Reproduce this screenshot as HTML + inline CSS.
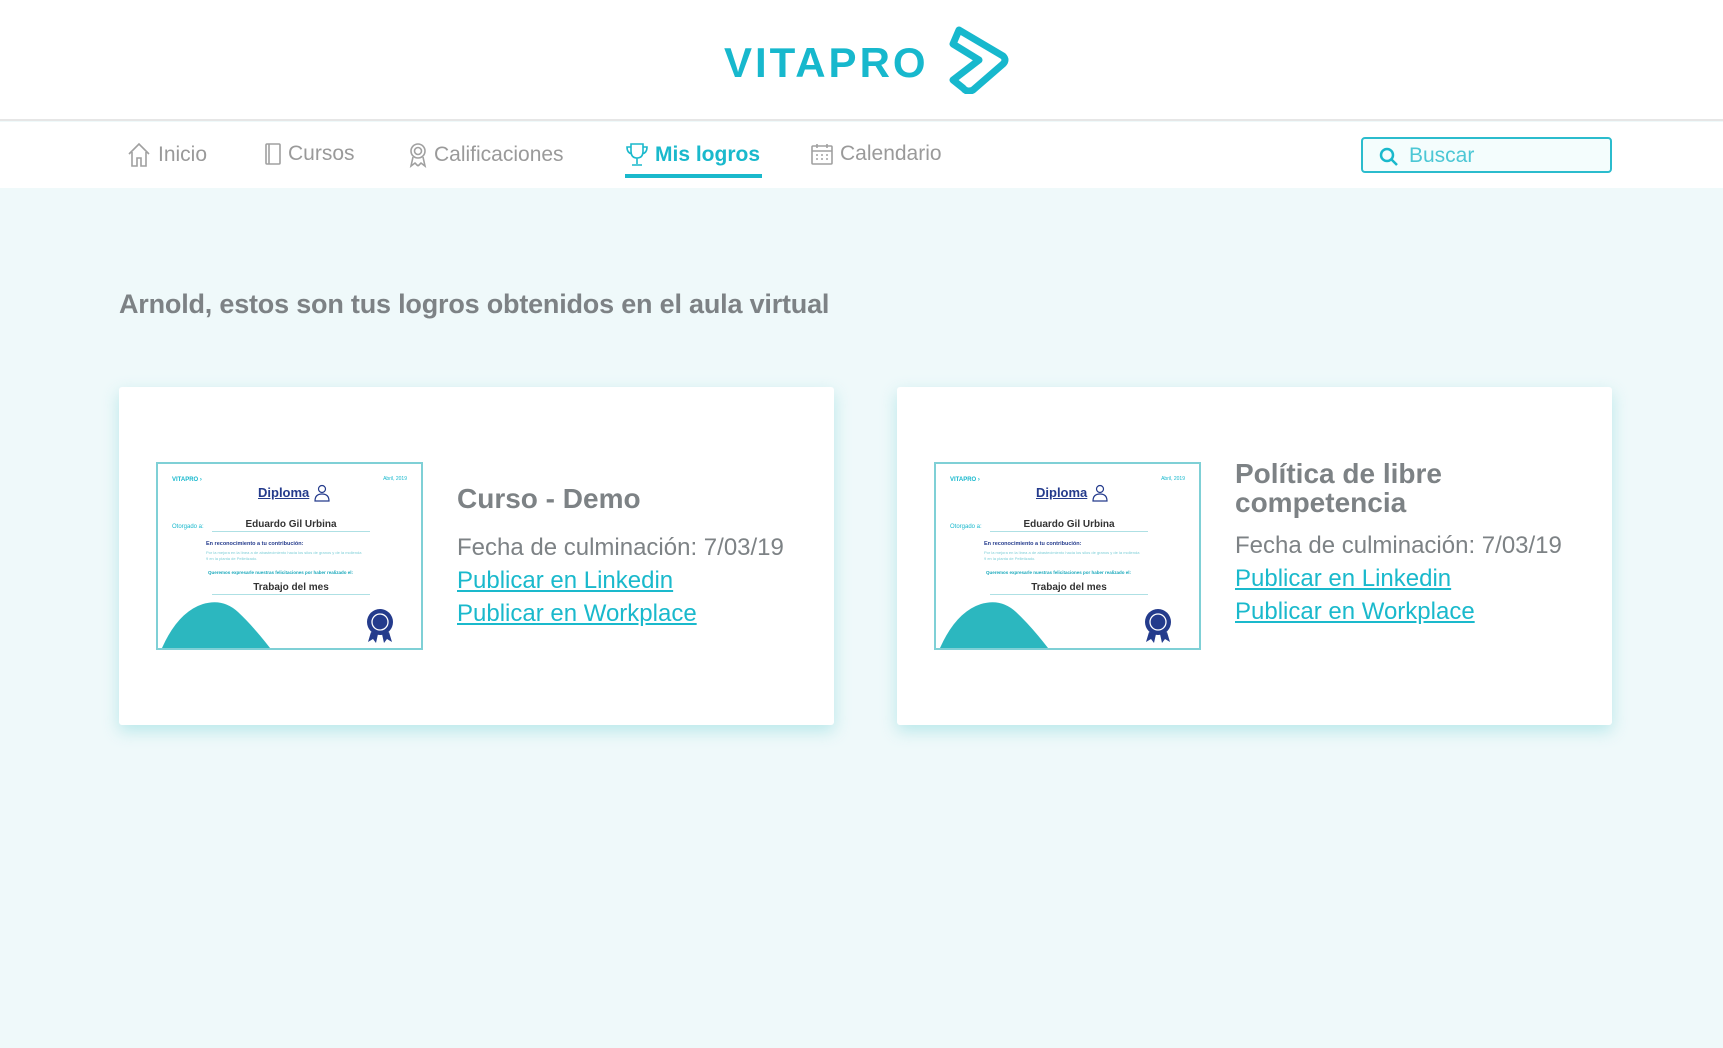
<!DOCTYPE html>
<html><head><meta charset="utf-8"><style>
*{margin:0;padding:0;box-sizing:border-box}
body{width:1723px;height:1048px;background:#eff9fa;font-family:"Liberation Sans",sans-serif;position:relative;overflow:hidden}
.hdr{position:absolute;left:0;top:0;width:1723px;height:121px;background:#fff;border-bottom:2px solid #e6e6e6}
.nav{position:absolute;left:0;top:122px;width:1723px;height:66px;background:#fff}
.ni{position:absolute;top:20px;font-size:21px;color:#9a9a9a;display:flex;align-items:center;gap:6px}
.ni svg{stroke:#a0a0a0;fill:none;stroke-width:1.6}
.act{color:#1ab9cc;font-weight:bold}
.act svg{stroke:#1ab9cc}
.search{position:absolute;left:1361px;top:137px;width:251px;height:36px;border:2px solid #2bbccd;border-radius:4px;background:#f4fdfd;color:#4cc7d5;font-size:21px;padding:5px 0 0 46px}
h1{position:absolute;left:119px;top:289px;font-size:27px;color:#7d8285;font-weight:bold;letter-spacing:-0.2px}
.card{position:absolute;top:387px;width:715px;height:338px;background:#fff;border-radius:3px;box-shadow:0 6px 16px rgba(120,210,215,.45)}
.txt{position:absolute;left:338px;color:#7d8285}
.t{font-size:28px;font-weight:bold;line-height:29px}
.f{font-size:24px;line-height:33px}
.l{font-size:24px;line-height:33px;color:#1ab9cc;text-decoration:underline}
.cert{position:absolute;left:37px;top:75px;width:267px;height:188px;border:2px solid #7fd0d6;background:#fff;overflow:hidden}
.cert div{position:absolute;white-space:nowrap}
</style></head><body>
<div class="hdr">
<div style="position:absolute;left:724px;top:39px;font-size:42px;font-weight:bold;color:#17b8cd;letter-spacing:3px">VITAPRO</div>
<svg style="position:absolute;left:945px;top:26px" width="64" height="68" viewBox="0 0 64 68"><path d="M14 4 L58 30 Q62 34 58 38 L28 64 Q22 67 18 62 L8 54 L34 34 L8 18 Z" fill="none" stroke="#17b8cd" stroke-width="7" stroke-linejoin="round"/></svg>
</div>
<div class="nav">
<div class="ni" style="left:126px"><svg width="26" height="26" viewBox="0 0 26 26"><path d="M3 12 L13 2 L23 12 M6 10 V24 H11 V16 H15 V24 H20 V10"/></svg>Inicio</div>
<div class="ni" style="left:264px"><svg width="18" height="24" viewBox="0 0 18 24"><rect x="2" y="2" width="14" height="20" rx="1"/><path d="M5 2 V22"/></svg>Cursos</div>
<div class="ni" style="left:408px"><svg width="20" height="26" viewBox="0 0 20 26"><circle cx="10" cy="9" r="7"/><circle cx="10" cy="9" r="3.5"/><path d="M5 15 L3 24 L7 21 L10 24 M15 15 L17 24 L13 21 L10 24"/></svg>Calificaciones</div>
<div class="ni act" style="left:625px"><svg width="24" height="26" viewBox="0 0 24 26"><path d="M6 2 H18 V9 Q18 16 12 16 Q6 16 6 9 Z M6 5 H2 Q2 11 7 12 M18 5 H22 Q22 11 17 12 M12 16 V22 M7 23 H17"/></svg>Mis logros</div>
<div class="ni" style="left:810px"><svg width="24" height="24" viewBox="0 0 24 24"><rect x="2" y="4" width="20" height="18" rx="1"/><path d="M2 9 H22 M7 2 V6 M17 2 V6 M6 13h2M11 13h2M16 13h2M6 17h2M11 17h2M16 17h2"/></svg>Calendario</div>
<div style="position:absolute;left:625px;top:52px;width:137px;height:4px;background:#1ab9cc"></div>
</div>
<div class="search"><svg style="position:absolute;left:16px;top:8px" width="20" height="20" viewBox="0 0 20 20"><circle cx="8" cy="8" r="6" fill="none" stroke="#1ab9cc" stroke-width="2.5"/><path d="M12.5 12.5 L18 18" stroke="#1ab9cc" stroke-width="2.5"/></svg>Buscar</div>
<h1>Arnold, estos son tus logros obtenidos en el aula virtual</h1>

<div class="card" style="left:119px">
<div class="cert">
<div style="left:14px;top:13px;font-size:6px;color:#17b8cd;font-weight:bold">VITAPRO ›</div>
<div style="right:14px;top:12px;font-size:5px;color:#17b8cd">Abril, 2019</div>
<div style="left:100px;top:21px;font-size:13px;color:#243b8c;font-weight:bold;text-decoration:underline">Diploma</div>
<svg style="position:absolute;left:156px;top:20px" width="16" height="18" viewBox="0 0 16 18"><circle cx="8" cy="5" r="3.5" fill="none" stroke="#243b8c" stroke-width="1.2"/><path d="M1 17 Q1 10 8 10 Q15 10 15 17 Z" fill="none" stroke="#243b8c" stroke-width="1.2"/></svg>
<div style="left:14px;top:60px;font-size:6px;color:#17b8cd">Otorgado a:</div>
<div style="left:54px;top:55px;width:158px;text-align:center;font-size:10px;font-weight:bold;color:#333;border-bottom:1px solid #aee0e4;padding-bottom:1px">Eduardo Gil Urbina</div>
<div style="left:48px;top:77px;font-size:5.5px;font-weight:bold;color:#243b8c">En reconocimiento a tu contribución:</div>
<div style="left:48px;top:86px;font-size:4px;color:#7fcfd8;line-height:6px">Por la mejora en la línea a de abastecimiento hacia los silos de granos y de la molienda<br>9 en la planta de Pelletizado.</div>
<div style="left:50px;top:106px;font-size:4.5px;font-weight:bold;color:#17a8bb">Queremos expresarle nuestras felicitaciones por haber realizado el:</div>
<div style="left:54px;top:118px;width:158px;text-align:center;font-size:10px;font-weight:bold;color:#333;border-bottom:1px solid #aee0e4;padding-bottom:1px">Trabajo del mes</div>
<svg style="position:absolute;left:0;top:130px" width="267" height="58" viewBox="0 0 267 58"><path d="M4 54 Q20 18 45 10 Q65 4 80 18 Q95 32 112 54 Z" fill="#2cb7bf"/><circle cx="222" cy="28" r="13" fill="#243b8c"/><circle cx="222" cy="28" r="8" fill="none" stroke="#fff" stroke-width="1.3"/><path d="M213 38 L210 48 L215 45 L218 49 L220 40 M231 38 L234 48 L229 45 L226 49 L224 40" fill="#243b8c"/></svg>
</div>
<div class="txt" style="top:97px"><div class="t">Curso - Demo</div><div style="height:18px"></div><div class="f">Fecha de culminación: 7/03/19</div><div class="l">Publicar en Linkedin</div><div class="l">Publicar en Workplace</div></div>
</div>

<div class="card" style="left:897px">
<div class="cert">
<div style="left:14px;top:13px;font-size:6px;color:#17b8cd;font-weight:bold">VITAPRO ›</div>
<div style="right:14px;top:12px;font-size:5px;color:#17b8cd">Abril, 2019</div>
<div style="left:100px;top:21px;font-size:13px;color:#243b8c;font-weight:bold;text-decoration:underline">Diploma</div>
<svg style="position:absolute;left:156px;top:20px" width="16" height="18" viewBox="0 0 16 18"><circle cx="8" cy="5" r="3.5" fill="none" stroke="#243b8c" stroke-width="1.2"/><path d="M1 17 Q1 10 8 10 Q15 10 15 17 Z" fill="none" stroke="#243b8c" stroke-width="1.2"/></svg>
<div style="left:14px;top:60px;font-size:6px;color:#17b8cd">Otorgado a:</div>
<div style="left:54px;top:55px;width:158px;text-align:center;font-size:10px;font-weight:bold;color:#333;border-bottom:1px solid #aee0e4;padding-bottom:1px">Eduardo Gil Urbina</div>
<div style="left:48px;top:77px;font-size:5.5px;font-weight:bold;color:#243b8c">En reconocimiento a tu contribución:</div>
<div style="left:48px;top:86px;font-size:4px;color:#7fcfd8;line-height:6px">Por la mejora en la línea a de abastecimiento hacia los silos de granos y de la molienda<br>9 en la planta de Pelletizado.</div>
<div style="left:50px;top:106px;font-size:4.5px;font-weight:bold;color:#17a8bb">Queremos expresarle nuestras felicitaciones por haber realizado el:</div>
<div style="left:54px;top:118px;width:158px;text-align:center;font-size:10px;font-weight:bold;color:#333;border-bottom:1px solid #aee0e4;padding-bottom:1px">Trabajo del mes</div>
<svg style="position:absolute;left:0;top:130px" width="267" height="58" viewBox="0 0 267 58"><path d="M4 54 Q20 18 45 10 Q65 4 80 18 Q95 32 112 54 Z" fill="#2cb7bf"/><circle cx="222" cy="28" r="13" fill="#243b8c"/><circle cx="222" cy="28" r="8" fill="none" stroke="#fff" stroke-width="1.3"/><path d="M213 38 L210 48 L215 45 L218 49 L220 40 M231 38 L234 48 L229 45 L226 49 L224 40" fill="#243b8c"/></svg>
</div>
<div class="txt" style="top:72px"><div class="t">Política de libre<br>competencia</div><div style="height:12px"></div><div class="f">Fecha de culminación: 7/03/19</div><div class="l">Publicar en Linkedin</div><div class="l">Publicar en Workplace</div></div>
</div>
</body></html>
